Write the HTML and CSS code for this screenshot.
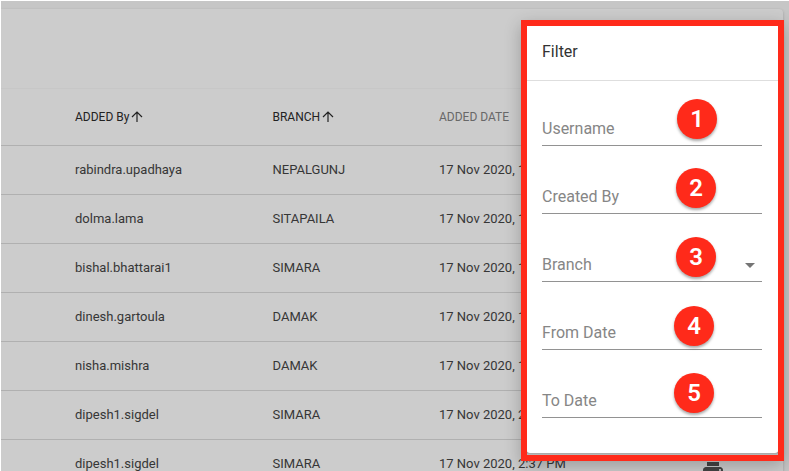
FILE: index.html
```
<!DOCTYPE html>
<html lang="en">
<head>
<meta charset="utf-8">
<title>Filter</title>
<link rel="stylesheet" href="styles.css">
</head>
<body>
<main class="page">
  <section class="card">
    <div class="toolbar"></div>
    <div class="row head">
      <div class="sorted tight">ADDED By<svg class="arrow" viewBox="0 0 12 12"><path d="M6 11V1.5M1 6l5-5 5 5"/></svg></div>
      <div class="sorted">BRANCH<svg class="arrow" viewBox="0 0 12 12"><path d="M6 11V1.5M1 6l5-5 5 5"/></svg></div>
      <div>ADDED DATE</div>
    </div>
    <div class="row"><div>rabindra.upadhaya</div><div>NEPALGUNJ</div><div>17 Nov 2020, 1</div></div>
    <div class="row"><div>dolma.lama</div><div>SITAPAILA</div><div>17 Nov 2020, 1</div></div>
    <div class="row"><div>bishal.bhattarai1</div><div>SIMARA</div><div>17 Nov 2020, 1</div></div>
    <div class="row"><div>dinesh.gartoula</div><div>DAMAK</div><div>17 Nov 2020, 1</div></div>
    <div class="row"><div>nisha.mishra</div><div>DAMAK</div><div>17 Nov 2020, 1</div></div>
    <div class="row"><div>dipesh1.sigdel</div><div>SIMARA</div><div>17 Nov 2020, 2</div></div>
    <div class="row"><div>dipesh1.sigdel</div><div>SIMARA</div><div>17 Nov 2020, 2:37 PM</div><svg class="printer" viewBox="2 3 20 18"><path d="M19 8H5c-1.66 0-3 1.34-3 3v6h4v4h12v-4h4v-6c0-1.66-1.34-3-3-3zm-3 11H8v-5h8v5zm3-7c-.55 0-1-.45-1-1s.45-1 1-1 1 .45 1 1-.45 1-1 1zm-1-9H6v4h12V3z"/></svg></div>
  </section>
</main>
<aside class="dialog">
  <div class="panel">
    <h1 class="title">Filter</h1>
    <div class="fields">
      <div class="field">Username<span class="badge b1">1</span></div>
      <div class="field">Created By<span class="badge b2">2</span></div>
      <div class="field">Branch<i class="caret"></i><span class="badge b3">3</span></div>
      <div class="field">From Date<span class="badge b4">4</span></div>
      <div class="field">To Date<span class="badge b5">5</span></div>
    </div>
  </div>
</aside>
</body>
</html>
```
FILE: styles.css
```
* { box-sizing: border-box; }
body {
  margin: 0;
  height: 471px;
  overflow: hidden;
  background: #fff;
  font-family: Roboto, sans-serif;
}
.page {
  height: 470px;
  margin: 1px 0 0 1px;
  padding-top: 8px;
  overflow: hidden;
  background: #c6c6c6;
}
.card {
  width: 782px;
  height: 490px;
  background: #ccc;
  border-radius: 0 4px 0 0;
  box-shadow: 0 1px 3px rgba(0, 0, 0, .2);
}
.toolbar {
  height: 80px;
  border-bottom: 1px solid #c7c7c7;
}
.row {
  display: grid;
  grid-template-columns: 197.5px 166.5px 264px 22px;
  align-items: center;
  height: 49px;
  padding: 0 0 2px 74px;
  border-bottom: 1px solid #b0b0b0;
  font-size: 13px;
  color: #363636;
  white-space: nowrap;
}
.head {
  height: 57px;
  padding-bottom: 0;
  font-size: 12px;
  font-weight: 400;
  color: #686868;
}
.sorted {
  display: flex;
  align-items: center;
  gap: 2px;
  font-weight: 450;
  color: #222;
}
.arrow {
  width: 12px;
  height: 12px;
  fill: none;
  stroke: #222;
  stroke-width: 1.2;
}
.printer {
  align-self: start;
  width: 20px;
  height: 18px;
  margin-top: 22px;
  fill: #444;
}
.dialog {
  position: absolute;
  left: 521px;
  top: 20px;
  width: 263px;
  height: 441px;
  border: 6px solid #ff2a1a;
  background: linear-gradient(#999, #bbb) bottom / 100% 3px no-repeat;
  box-shadow: 0 5px 16px rgba(0, 0, 0, .24);
}
.panel {
  height: 427px;
  background: #fff;
  border-radius: 0 0 3px 3px;
}
.title {
  height: 55px;
  margin: 0;
  padding-left: 15px;
  border-bottom: 1px solid #dedede;
  font-size: 16px;
  font-weight: 400;
  line-height: 51px;
  color: #333;
}
.fields {
  padding: 25px 16px 0 15px;
}
.field {
  position: relative;
  display: flex;
  align-items: center;
  justify-content: space-between;
  height: 40px;
  margin-bottom: 28px;
  padding: 6px 7px 0 0;
  border-bottom: 1px solid #929292;
  font-size: 16px;
  font-weight: 400;
  color: #868686;
}
.caret {
  margin-top: 1px;
  border: 5px solid transparent;
  border-top-color: #757575;
  border-bottom: 0;
}
.badge {
  position: absolute;
  width: 40px;
  height: 40px;
  border-radius: 50%;
  background: #ff2a1a;
  box-shadow: 0 2px 3px rgba(0, 0, 0, .35);
  font-size: 24px;
  font-weight: 600;
  line-height: 41px;
  text-align: center;
  color: #fff;
}
.b1 { left: 135px; top: -7px; }
.b2 { left: 134px; top: -6px; }
.b3 { left: 134px; top: -5px; }
.b4 { left: 132px; top: -4px; }
.b5 { left: 132px; top: -5px; }
```
